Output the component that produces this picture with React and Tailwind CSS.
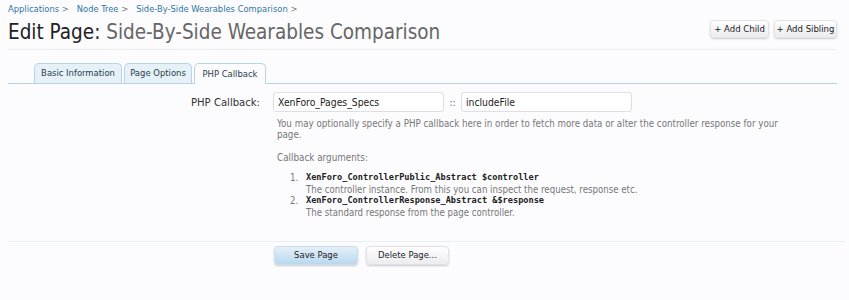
import React from "react";

const F = { fontFamily: '"DejaVu Sans Condensed","DejaVu Sans",sans-serif', fontStretch: "condensed" };
const M = { fontFamily: '"DejaVu Sans Mono",monospace' };

export default function App() {
  return (
    <div className="w-[849px] h-[300px] bg-[#fcfcfe] text-[#333] overflow-hidden" style={F}>
      <div className="pl-[8px] pr-[12px] pt-[3px]">
        {/* breadcrumb */}
        <div className="flex gap-[8px] text-[9.3px] leading-[12px] text-[#2f74a3]">
          <span>Applications <span className="text-[#777]">&gt;</span></span>
          <span>Node Tree <span className="text-[#777]">&gt;</span></span>
          <span>Side-By-Side Wearables Comparison <span className="text-[#777]">&gt;</span></span>
        </div>
        {/* title row */}
        <div className="flex items-start justify-between border-b border-[#ececf0] pb-[3px]">
          <h1 className="text-[20.5px] leading-[28px] mt-[3px] text-[#222]">
            Edit Page: <span className="text-[#666]">Side-By-Side Wearables Comparison</span>
          </h1>
          <div className="flex gap-[5px] mt-[5px]">
            <button className="w-[59px] h-[18px] rounded-[4px] text-[9.5px] text-[#222] bg-gradient-to-b from-[#ffffff] to-[#ececf0] border border-[#e2e2e8] shadow-[0_1px_2px_rgba(0,0,0,0.2)]">+ Add Child</button>
            <button className="w-[63px] h-[18px] rounded-[4px] text-[9.5px] text-[#222] bg-gradient-to-b from-[#ffffff] to-[#ececf0] border border-[#e2e2e8] shadow-[0_1px_2px_rgba(0,0,0,0.2)]">+ Add Sibling</button>
          </div>
        </div>
      </div>

      {/* tabs */}
      <div className="ml-[8px] mr-[12px] mt-[13px] flex items-end pl-[26px] gap-[2px] border-b border-[#b7d3e6] h-[21px]">
        <div className="w-[88px] h-[20px] flex items-center justify-center text-[9.4px] text-[#2b3e4f] bg-[#e6f0f7] border border-b-0 border-[#b7d3e6] rounded-t-[5px]">Basic Information</div>
        <div className="w-[68px] h-[20px] flex items-center justify-center text-[9.4px] text-[#2b3e4f] bg-[#e6f0f7] border border-b-0 border-[#b7d3e6] rounded-t-[5px]">Page Options</div>
        <div className="w-[72px] h-[21px] -mb-px flex items-center justify-center text-[9.4px] text-[#2b3e4f] bg-[#fcfcfe] border border-b-0 border-[#b7d3e6] rounded-t-[5px]">PHP Callback</div>
      </div>

      {/* form */}
      <div className="flex mt-[8px]">
        <div className="w-[260px] text-right text-[11.2px] text-[#333] pt-[3px]">PHP Callback:</div>
        <div className="ml-[13px]">
          <div className="flex items-center">
            <div className="w-[171px] h-[20px] bg-white border border-[#dedee4] rounded-[3px] px-[4px] text-[10.3px] leading-[18px] text-[#222]">XenForo_Pages_Specs</div>
            <span className="w-[17px] text-center text-[10px] text-[#555]">::</span>
            <div className="w-[171px] h-[20px] bg-white border border-[#dedee4] rounded-[3px] px-[4px] text-[10.3px] leading-[18px] text-[#222]">includeFile</div>
          </div>
          <p className="mt-[6px] ml-[4px] w-[505px] text-[9.7px] leading-[11px] text-[#777]">
            You may optionally specify a PHP callback here in order to fetch more data or alter the controller response for your page.
          </p>
          <p className="mt-[12px] ml-[4px] text-[9.8px] leading-[11px] text-[#777]">Callback arguments:</p>
          <ol className="mt-[9px] ml-[17px] text-[9.6px] leading-[11.5px] text-[#777]">
            <li className="flex">
              <span className="w-[16px]">1.</span>
              <div>
                <div className="font-bold text-[#222] text-[8.6px]" style={M}>XenForo_ControllerPublic_Abstract $controller</div>
                <div>The controller instance. From this you can inspect the request, response etc.</div>
              </div>
            </li>
            <li className="flex">
              <span className="w-[16px]">2.</span>
              <div>
                <div className="font-bold text-[#222] text-[8.6px]" style={M}>XenForo_ControllerResponse_Abstract &amp;$response</div>
                <div>The standard response from the page controller.</div>
              </div>
            </li>
          </ol>
        </div>
      </div>

      {/* footer */}
      <div className="ml-[8px] mr-[4px] mt-[23px] border-t border-[#e6eff2]"></div>
      <div className="flex gap-[8px] ml-[274px] mt-[4px]">
        <button className="w-[84px] h-[19px] rounded-[4px] text-[9.4px] text-[#222] bg-gradient-to-b from-[#e4f0f9] to-[#b9d8ef] border border-[#c9dded] shadow-[0_1px_2px_rgba(0,0,0,0.2)]">Save Page</button>
        <button className="w-[83px] h-[19px] rounded-[4px] text-[9.4px] text-[#222] bg-gradient-to-b from-[#ffffff] to-[#ececf1] border border-[#e0e0e6] shadow-[0_1px_2px_rgba(0,0,0,0.2)]">Delete Page...</button>
      </div>
    </div>
  );
}
